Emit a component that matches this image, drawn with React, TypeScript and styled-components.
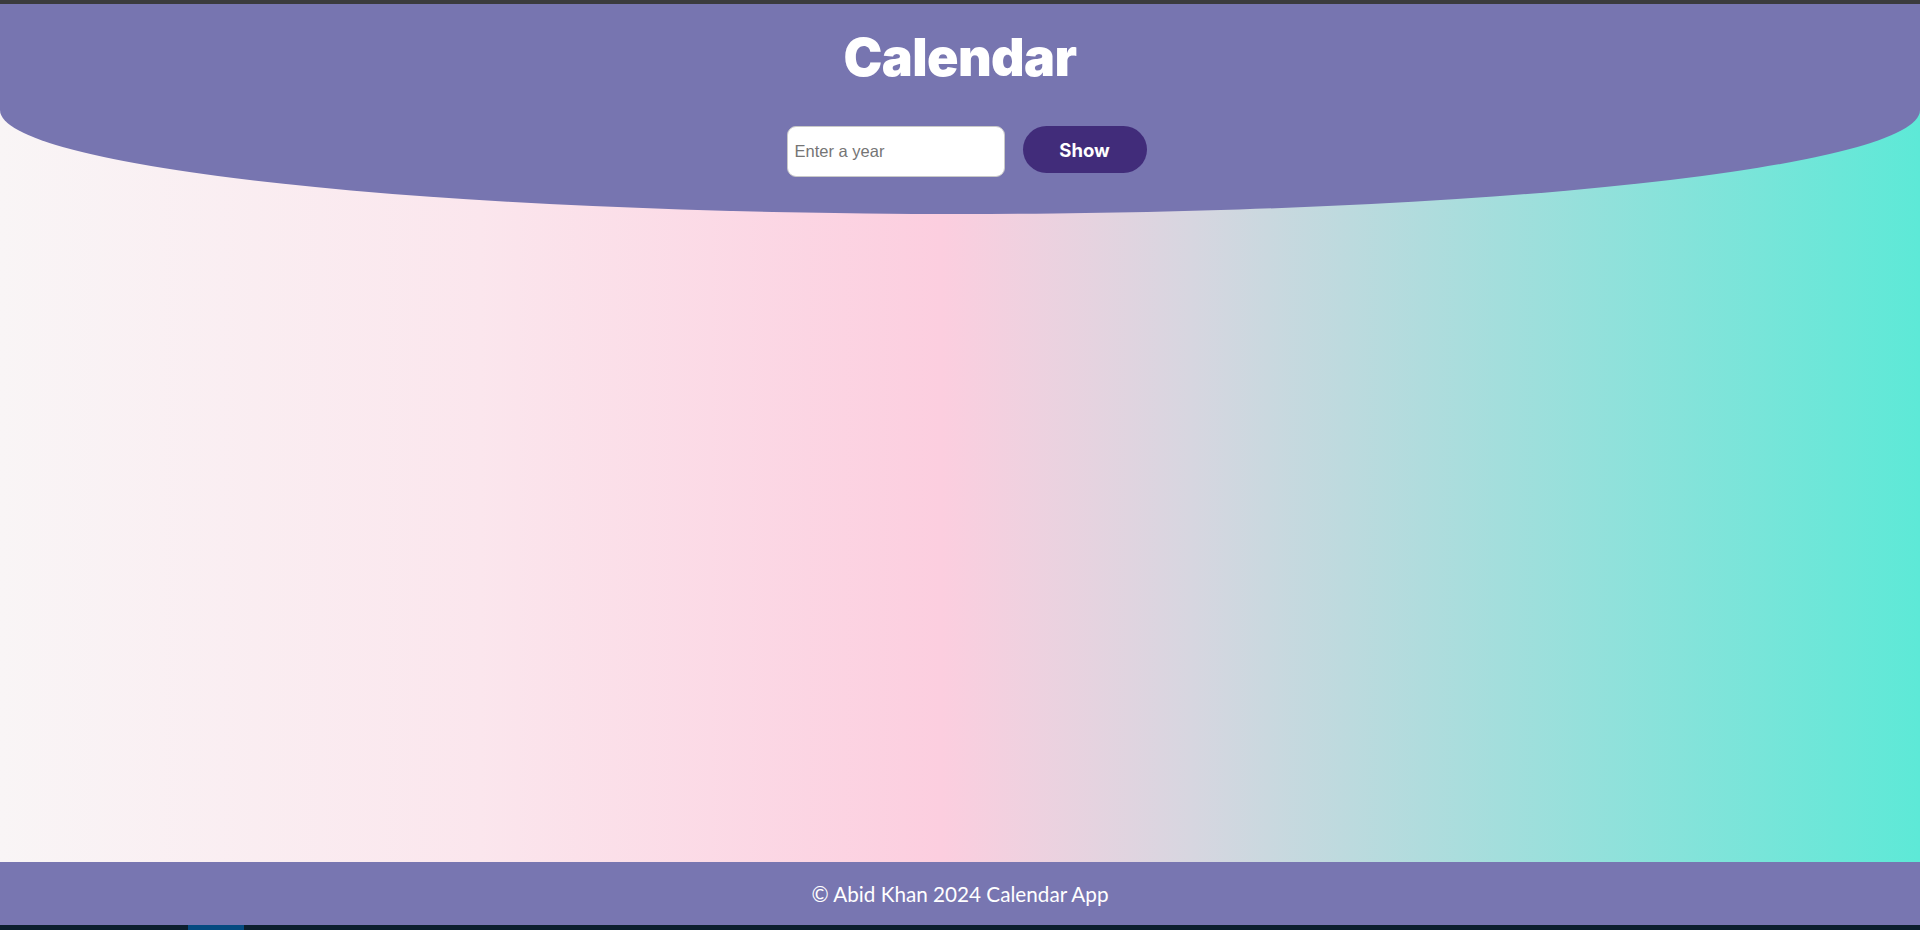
import React from "react";
import styled, { createGlobalStyle } from "styled-components";

const GlobalStyle = createGlobalStyle`
  html, body { margin: 0; padding: 0; }
  body { font-family: "Lato", "Inter", sans-serif; }
  * { box-sizing: border-box; }
`;

const Page = styled.div`
  height: 100vh;
  display: flex;
  flex-direction: column;
  background: linear-gradient(90deg, #f9f5f6 0%, #fbe6ed 25%, #fcceDF 49%, #d7d6e0 62%, #5de9d7 100%);
`;

const TopStrip = styled.div`
  height: 4px;
  flex: none;
  background: #3b3b3d;
`;

const Header = styled.header`
  flex: none;
  height: 210px;
  background: #7775b0;
  border-bottom-left-radius: 960px 104px;
  border-bottom-right-radius: 960px 104px;
  display: flex;
  flex-direction: column;
  align-items: center;
  padding-top: 28px;
`;

const Title = styled.h1`
  margin: 0;
  font-family: "Inter", "Lato", sans-serif;
  font-weight: 900;
  font-size: 52px;
  line-height: 52px;
  color: #ffffff;
  letter-spacing: -0.6px;
`;

const Form = styled.form`
  display: flex;
  align-items: flex-start;
  gap: 18px;
  margin-top: 42px;
  margin-left: 13px;
`;

const YearInput = styled.input`
  width: 218px;
  height: 51px;
  padding: 0 7px;
  border: 1px solid #c9c9c9;
  border-radius: 9px;
  background: #ffffff;
  font-family: "Liberation Sans", Arial, sans-serif;
  font-size: 16.5px;
  color: #222;
  outline: none;
  &::placeholder { color: #757575; }
`;

const ShowButton = styled.button`
  width: 124px;
  height: 47px;
  border: none;
  border-radius: 24px;
  background: #412c7a;
  color: #ffffff;
  font-family: "Inter", "Lato", sans-serif;
  font-weight: 700;
  font-size: 18.5px;
  cursor: pointer;
`;

const Main = styled.main`
  flex: 1;
`;

const Footer = styled.footer`
  flex: none;
  height: 63px;
  background: #7876b1;
  display: flex;
  align-items: center;
  justify-content: center;
  color: #ffffff;
  font-family: "Lato", sans-serif;
  font-size: 20.7px;
`;

const Taskbar = styled.div`
  flex: none;
  height: 5px;
  background: #0c1f2e;
  display: flex;
`;

const TaskItem = styled.div`
  margin-left: 188px;
  width: 56px;
  background: #054a80;
`;

export default function App() {
  return (
    <>
      <GlobalStyle />
      <Page>
        <TopStrip />
        <Header>
          <Title>Calendar</Title>
          <Form onSubmit={(e) => e.preventDefault()}>
            <YearInput type="text" placeholder="Enter a year" />
            <ShowButton type="submit">Show</ShowButton>
          </Form>
        </Header>
        <Main />
        <Footer>© Abid Khan 2024 Calendar App</Footer>
        <Taskbar>
          <TaskItem />
        </Taskbar>
      </Page>
    </>
  );
}
